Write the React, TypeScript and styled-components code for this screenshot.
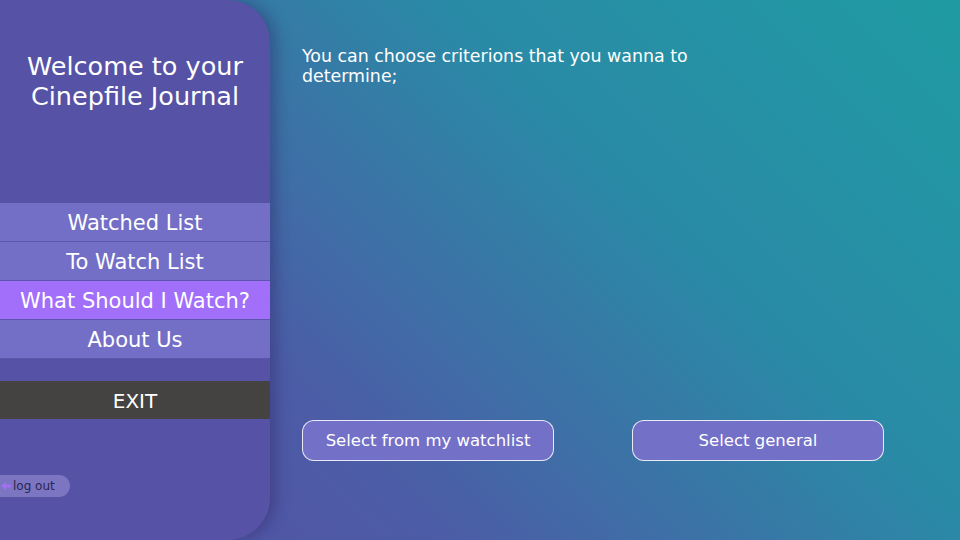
import React from "react";
import styled, { createGlobalStyle } from "styled-components";

const Global = createGlobalStyle`
  html, body { margin: 0; padding: 0; }
  body {
    width: 960px; height: 540px; overflow: hidden;
    font-family: "DejaVu Sans", "Open Sans", sans-serif;
  }
  #root { height: 540px; }
`;

const Page = styled.div`
  display: flex;
  width: 960px;
  height: 540px;
  background: linear-gradient(225deg, #1f9ba3 0%, #2a8aa6 35%, #4c5ca6 70%, #5650a4 100%);
  color: #fff;
`;

const Sidebar = styled.aside`
  width: 270px;
  flex-shrink: 0;
  height: 540px;
  background: #5652a5;
  border-radius: 0 42px 42px 0;
  box-shadow: 6px 0 14px rgba(40, 30, 90, 0.35);
  display: flex;
  flex-direction: column;
`;

const Title = styled.h1`
  margin: 51px 0 0 0;
  padding: 0 4px;
  font-weight: 400;
  font-size: 25.5px;
  line-height: 30px;
  text-align: center;
`;

const Menu = styled.nav`
  margin-top: 92px;
  display: flex;
  flex-direction: column;
`;

const MenuItem = styled.div<{ $active?: boolean }>`
  height: 38px;
  box-sizing: border-box;
  padding-top: 2px;
  display: flex;
  align-items: center;
  justify-content: center;
  font-size: 21px;
  background: ${(p) => (p.$active ? "#a16ff9" : "#736fc6")};
  border-bottom: 1px solid #5a56ab;
  height: 39px;
`;

const Exit = styled.div`
  margin-top: 22px;
  height: 38px;
  box-sizing: border-box;
  padding-top: 1px;
  display: flex;
  align-items: center;
  justify-content: center;
  font-size: 20px;
  background: #454341;
`;

const Logout = styled.div`
  margin-top: 56px;
  margin-left: -12px;
  width: 82px;
  height: 22px;
  border-radius: 11px;
  background: rgba(170, 160, 230, 0.45);
  display: flex;
  align-items: center;
  padding-left: 12px;
  box-sizing: border-box;
  gap: 1px;
  color: #2a2550;
  font-size: 12px;
`;

const Main = styled.main`
  flex: 1;
  padding: 46px 0 0 32px;
  display: flex;
  flex-direction: column;
`;

const Intro = styled.p`
  margin: 0;
  width: 410px;
  font-size: 17.4px;
  line-height: 20px;
`;

const Buttons = styled.div`
  margin-top: 334px;
  display: flex;
  gap: 78px;
`;

const Btn = styled.button`
  width: 252px;
  height: 41px;
  border-radius: 12px;
  border: 1px solid rgba(255, 255, 255, 0.85);
  background: #7370c8;
  color: #fff;
  font-family: inherit;
  font-size: 16.5px;
  box-sizing: border-box;
  padding: 0;
`;

export default function App() {
  return (
    <>
      <Global />
      <Page>
        <Sidebar>
          <Title>
            Welcome to your
            <br />
            Cinepfile Journal
          </Title>
          <Menu>
            <MenuItem>Watched List</MenuItem>
            <MenuItem>To Watch List</MenuItem>
            <MenuItem $active>What Should I Watch?</MenuItem>
            <MenuItem>About Us</MenuItem>
          </Menu>
          <Exit>EXIT</Exit>
          <Logout>
            <svg width="12" height="10" viewBox="0 0 12 10">
              <path d="M1 5 L6 1 L6 3.5 L11 3.5 L11 6.5 L6 6.5 L6 9 Z" fill="#a070f0" />
            </svg>
            <span>log out</span>
          </Logout>
        </Sidebar>
        <Main>
          <Intro>You can choose criterions that you wanna to determine;</Intro>
          <Buttons>
            <Btn>Select from my watchlist</Btn>
            <Btn>Select general</Btn>
          </Buttons>
        </Main>
      </Page>
    </>
  );
}
